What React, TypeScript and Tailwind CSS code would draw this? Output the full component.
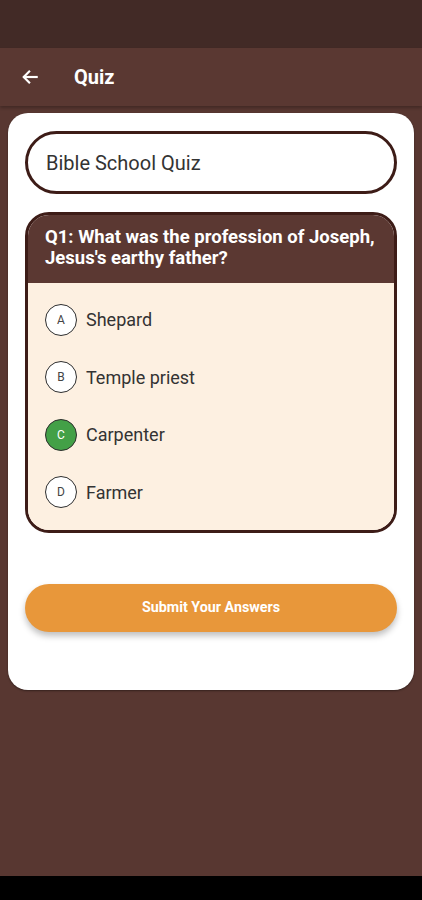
import React, { useState } from 'react';

const options = [
  { key: 'A', label: 'Shepard' },
  { key: 'B', label: 'Temple priest' },
  { key: 'C', label: 'Carpenter' },
  { key: 'D', label: 'Farmer' },
];

const App: React.FC = () => {
  const [selected, setSelected] = useState('C');

  return (
    <div
      className="w-[422px] h-[900px] flex flex-col bg-[#583731] overflow-hidden"
      style={{ fontFamily: 'Roboto, "Liberation Sans", sans-serif' }}
    >
      {/* status bar */}
      <div className="h-[48px] shrink-0 bg-[#422a26]" />

      {/* app bar */}
      <div className="h-[58px] shrink-0 flex items-center bg-[#5a3832] shadow-[0_2px_3px_rgba(0,0,0,0.25)] z-10">
        <button className="w-[60px] h-full flex items-center justify-center text-white">
          <svg width="20" height="20" viewBox="0 0 24 24" fill="none" stroke="currentColor" strokeWidth="2.6" strokeLinecap="square">
            <path d="M20 12H5" />
            <path d="M11 5.5L4.5 12l6.5 6.5" />
          </svg>
        </button>
        <h1 className="ml-[14px] text-[20px] font-bold text-white">Quiz</h1>
      </div>

      <div className="flex-1 px-[8px] pt-[7px]">
        <div className="bg-white rounded-[20px] px-[17px] pt-[18px] pb-[58px] shadow-[0_1px_2px_rgba(0,0,0,0.4)]">
          <div className="h-[63px] rounded-full border-[3px] border-[#3d1c17] flex items-center px-[18px]">
            <span className="text-[20px] text-[#333333]">Bible School Quiz</span>
          </div>

          <div className="mt-[18px] rounded-[24px] border-[3px] border-[#3d1c17] overflow-hidden">
            <div className="bg-[#5b3832] px-[17px] pt-[12px] pb-[14px]">
              <p className="text-[18.5px] leading-[21px] font-bold text-white">
                Q1: What was the profession of Joseph, Jesus's earthy father?
              </p>
            </div>
            <div className="bg-[#fdf0e1] pt-[8px] pb-[9px] px-[17px]">
              {options.map((o) => {
                const active = selected === o.key;
                return (
                  <button
                    key={o.key}
                    onClick={() => setSelected(o.key)}
                    className="w-full h-[57.5px] flex items-center gap-[9px] text-left"
                  >
                    <span
                      className={
                        active
                          ? 'w-[32px] h-[32px] rounded-full border border-[#2e2e2e] bg-[#43a047] text-white flex items-center justify-center text-[12px]'
                          : 'w-[32px] h-[32px] rounded-full border border-[#2e2e2e] bg-white text-[#444444] flex items-center justify-center text-[12px]'
                      }
                    >
                      {o.key}
                    </span>
                    <span className="text-[18px] text-[#333333]">{o.label}</span>
                  </button>
                );
              })}
            </div>
          </div>

          <button className="mt-[51px] w-full h-[48px] rounded-full bg-[#e8973a] text-white text-[14.3px] font-bold shadow-[0_4px_6px_rgba(0,0,0,0.25)]">
            Submit Your Answers
          </button>
        </div>
      </div>

      {/* nav bar */}
      <div className="h-[24px] shrink-0 bg-black" />
    </div>
  );
};

export default App;
